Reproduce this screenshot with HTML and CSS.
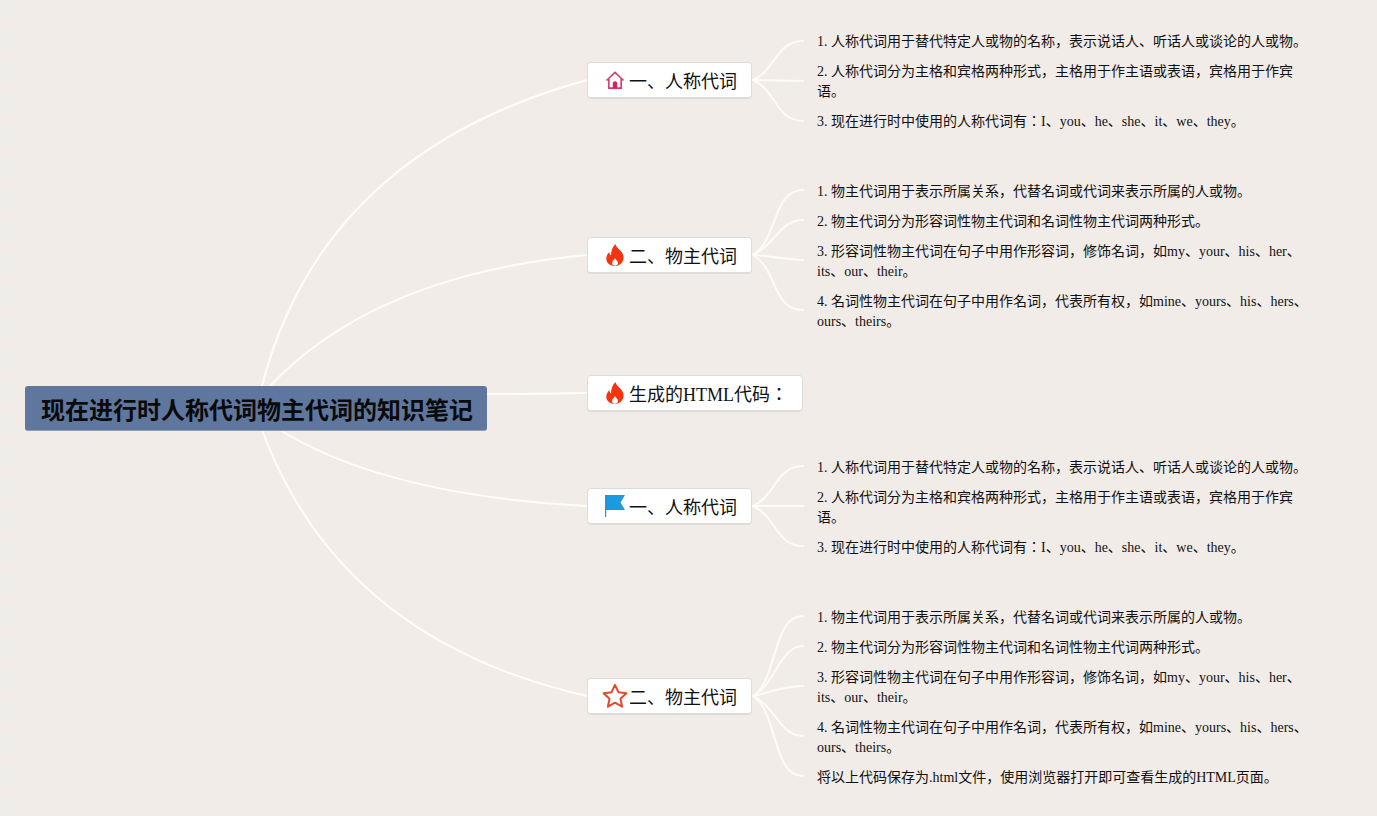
FILE: index.html
```html
<!DOCTYPE html>
<html>
<head>
<meta charset="utf-8">
<title>现在进行时人称代词物主代词的知识笔记</title>
<link rel="stylesheet" href="styles.css">
</head>
<body>
<main class="map">
  <div class="edge-strip"></div>
  <svg class="links" width="1377" height="816" viewBox="0 0 1377 816" fill="none">
    <g class="trunk">
      <path d="M262 386Q322 153 587 80"/>
      <path d="M270 386Q375 275 587 255"/>
      <path d="M487 394Q540 394 587 393"/>
      <path d="M280 430Q385 495 587 506"/>
      <path d="M262 430Q340 640 587 696"/>
    </g>
    <g class="twig">
      <path d="M753 80C776 70 776 41 803 41"/>
      <path d="M753 80L803 81"/>
      <path d="M753 80C776 90 776 121 803 121"/>

      <path d="M753 255C778 240 772 190 803 190"/>
      <path d="M753 255C775 245 780 220 803 220"/>
      <path d="M753 255C770 256 785 259 803 260"/>
      <path d="M753 255C778 270 772 310 803 310"/>

      <path d="M753 506C776 496 776 466 803 466"/>
      <path d="M753 506L803 506"/>
      <path d="M753 506C776 516 776 546 803 546"/>

      <path d="M753 696C778 680 772 616 803 616"/>
      <path d="M753 696C775 685 780 646 803 646"/>
      <path d="M753 696C770 692 785 686 803 686"/>
      <path d="M753 696C775 706 780 736 803 736"/>
      <path d="M753 696C778 712 772 776 803 776"/>
    </g>
  </svg>

  <div class="root">现在进行时人称代词物主代词的知识笔记</div>

  <div class="node n1">
    <svg class="icon" viewBox="0 0 20 22" fill="none"><path class="house" d="M1.500 11.500 10 3.500l8.500 8M3.800 10v9.200h12.400V10"/><path class="door" d="M7.800 19.500v-5a2.200 2.200 0 0 1 4.400 0v5z"/></svg>
    <span>一、人称代词</span>
  </div>
  <div class="node n2">
    <svg class="icon" viewBox="0 0 20 22"><path class="flame" fill-rule="evenodd" d="M10.500 0c.6 4 6 6 7.700 11 1.700 5.500-2.700 11-8.200 11S.6 18 1.400 13.500C1.900 11 3 9.500 4.300 8c.2 1.700.7 2.800 1.700 3.500C6 7 7.500 2.500 10.500 0zM10 14c-.3 1.600-3 2.800-3 5.200 0 1.500 1.300 2.500 3 2.500s3-1 3-2.500c0-2.400-2.700-3.600-3-5.200z"/></svg>
    <span>二、物主代词</span>
  </div>
  <div class="node n3">
    <svg class="icon" viewBox="0 0 20 22"><path class="flame" fill-rule="evenodd" d="M10.500 0c.6 4 6 6 7.700 11 1.700 5.500-2.700 11-8.200 11S.6 18 1.400 13.500C1.900 11 3 9.500 4.300 8c.2 1.700.7 2.800 1.700 3.500C6 7 7.500 2.500 10.500 0zM10 14c-.3 1.600-3 2.800-3 5.200 0 1.500 1.300 2.500 3 2.500s3-1 3-2.500c0-2.400-2.700-3.600-3-5.200z"/></svg>
    <span>生成的HTML代码：</span>
  </div>
  <div class="node n4">
    <svg class="icon" viewBox="0 0 20 22"><path class="flag" d="M0 0h20l-4.500 7.500L20 15H1.200v7H0z"/></svg>
    <span>一、人称代词</span>
  </div>
  <div class="node n5">
    <svg class="icon star" viewBox="0 0 26 26" fill="none"><path class="star-line" d="M13 1.800l3.400 7.400 8 1-5.900 5.500 1.600 8-7.100-4-7.100 4 1.600-8-5.900-5.500 8-1z"/></svg>
    <span>二、物主代词</span>
  </div>

  <div class="leaves g1">
    <p>1. 人称代词用于替代特定人或物的名称，表示说话人、听话人或谈论的人或物。</p>
    <p>2. 人称代词分为主格和宾格两种形式，主格用于作主语或表语，宾格用于作宾语。</p>
    <p>3. 现在进行时中使用的人称代词有：I、you、he、she、it、we、they。</p>
  </div>
  <div class="leaves g2">
    <p>1. 物主代词用于表示所属关系，代替名词或代词来表示所属的人或物。</p>
    <p>2. 物主代词分为形容词性物主代词和名词性物主代词两种形式。</p>
    <p>3. 形容词性物主代词在句子中用作形容词，修饰名词，如my、your、his、her、its、our、their。</p>
    <p>4. 名词性物主代词在句子中用作名词，代表所有权，如mine、yours、his、hers、ours、theirs。</p>
  </div>
  <div class="leaves g3">
    <p>1. 人称代词用于替代特定人或物的名称，表示说话人、听话人或谈论的人或物。</p>
    <p>2. 人称代词分为主格和宾格两种形式，主格用于作主语或表语，宾格用于作宾语。</p>
    <p>3. 现在进行时中使用的人称代词有：I、you、he、she、it、we、they。</p>
  </div>
  <div class="leaves g4">
    <p>1. 物主代词用于表示所属关系，代替名词或代词来表示所属的人或物。</p>
    <p>2. 物主代词分为形容词性物主代词和名词性物主代词两种形式。</p>
    <p>3. 形容词性物主代词在句子中用作形容词，修饰名词，如my、your、his、her、its、our、their。</p>
    <p>4. 名词性物主代词在句子中用作名词，代表所有权，如mine、yours、his、hers、ours、theirs。</p>
    <p>将以上代码保存为.html文件，使用浏览器打开即可查看生成的HTML页面。</p>
  </div>
</main>
</body>
</html>
```

FILE: styles.css
```css
* { box-sizing: border-box; }
html, body { margin: 0; padding: 0; }
body {
  background: #f1ece7;
  font-family: "Liberation Serif", "Noto Sans CJK JP", serif;
  color: #111;
  overflow: hidden;
}
.map {
  position: relative;
  width: 1377px;
  height: 816px;
  overflow: hidden;
}
.edge-strip {
  position: absolute;
  left: 0;
  top: 0;
  width: 16px;
  height: 816px;
  background: repeating-linear-gradient(180deg, #efedea 0 18px, #f3ebe6 18px 30px, #f0ece8 30px 32px);
}
.links { position: absolute; left: 0; top: 0; }
.trunk path { stroke: #fffdfb; stroke-width: 2; stroke-linecap: round; }
.twig path { stroke: #fdfbf8; stroke-width: 2; stroke-linecap: round; }

.root {
  position: absolute;
  left: 25px;
  top: 386px;
  width: 462px;
  height: 45px;
  padding-left: 16px;
  display: flex;
  align-items: center;
  background: #5f779f;
  border-bottom: 1px solid #8f9db8;
  border-radius: 3px;
  font-size: 24px;
  font-weight: 700;
  color: #0a0a0a;
  white-space: nowrap;
}
.node {
  position: absolute;
  left: 587px;
  height: 37px;
  padding: 0 14px 1px 17px;
  display: flex;
  align-items: center;
  gap: 4px;
  background: #fff;
  border: 1px solid #dedcda;
  border-bottom-width: 2px;
  border-radius: 4px;
  font-size: 18px;
  white-space: nowrap;
}
.n1 { top: 62px; }
.n2 { top: 237px; }
.n3 { top: 375px; }
.n4 { top: 488px; }
.n5 { top: 678px; }
.icon { width: 20px; height: 22px; flex: none; overflow: visible; }
.icon.star { width: 26px; height: 26px; margin: 0 -3px 0 -3px; }
.house { stroke: #d93d70; stroke-width: 1.7; }
.door { fill: #d81e5b; }
.flame { fill: #f5330f; }
.flag { fill: #1a9ae0; }
.star-line { stroke: #e3492f; stroke-width: 2; stroke-linejoin: round; }

.leaves {
  position: absolute;
  left: 817px;
  width: 500px;
  display: flex;
  flex-direction: column;
  gap: 10px;
  font-size: 14px;
  line-height: 20px;
  color: #111;
}
.leaves p { margin: 0; }
.g1 { top: 32px; }
.g2 { top: 182px; }
.g3 { top: 458px; }
.g4 { top: 608px; }
```
